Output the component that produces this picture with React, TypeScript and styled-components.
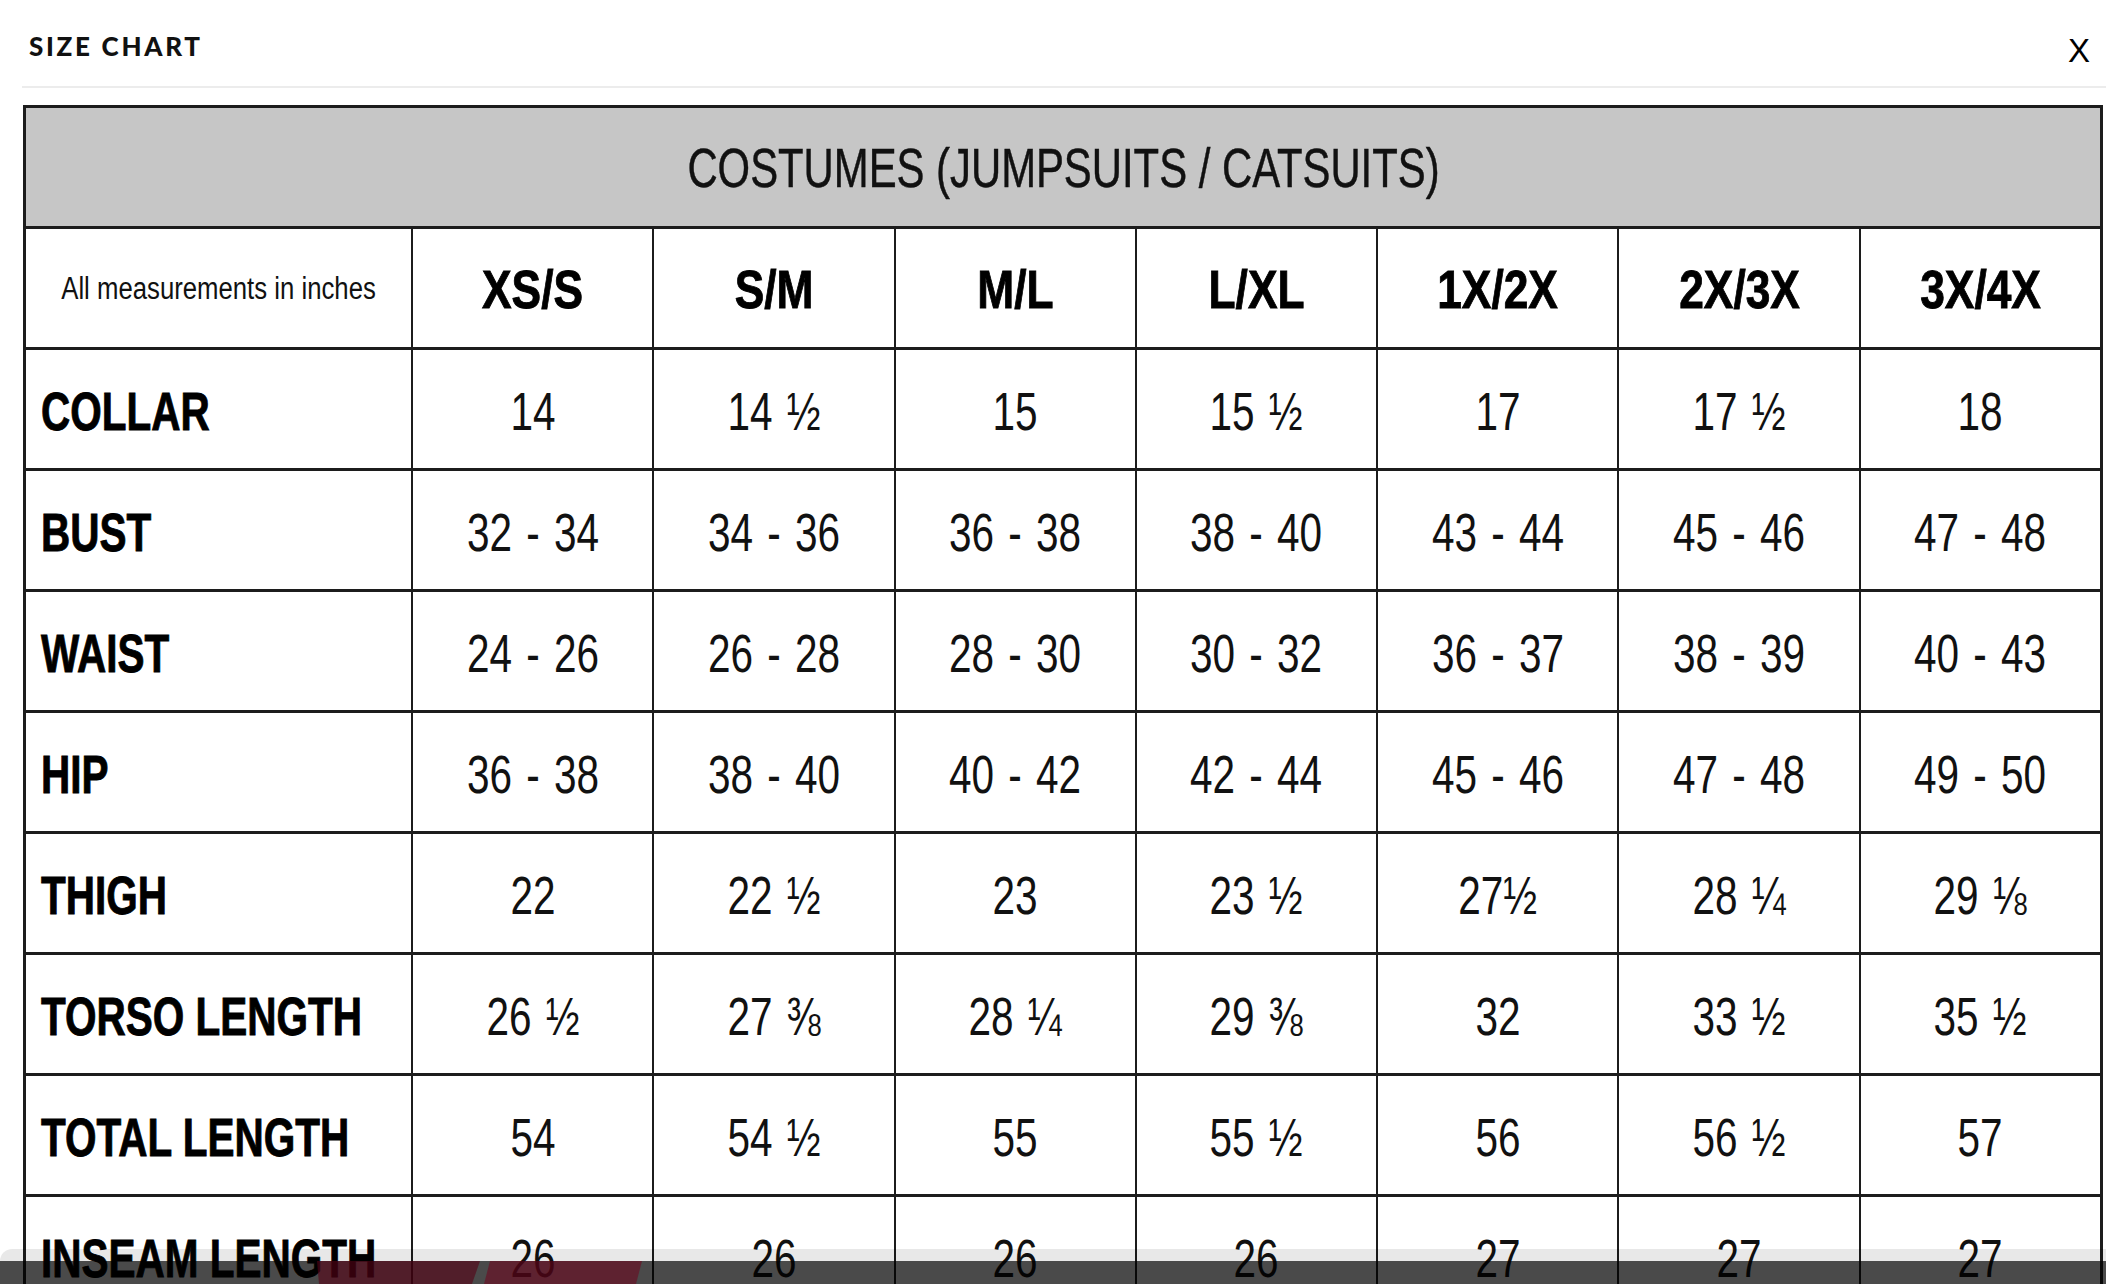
import React from "react";
import styled, { createGlobalStyle } from "styled-components";

const GlobalStyle = createGlobalStyle`
  html, body {
    margin: 0;
    padding: 0;
    background: #ffffff;
    overflow: hidden;
  }
  #root {
    width: 2106px;
    height: 1284px;
  }
`;

const Page = styled.div`
  position: relative;
  width: 2106px;
  height: 1284px;
  overflow: hidden;
  background: #ffffff;
`;

const Header = styled.header`
  display: flex;
  justify-content: space-between;
  align-items: flex-start;
  box-sizing: border-box;
  height: 88px;
  margin-left: 22px;
  padding: 33px 16px 0 7px;
  border-bottom: 2px solid #ececec;
`;

const Title = styled.h2`
  margin: 0;
  font-family: Lato, "Open Sans", sans-serif;
  font-weight: 900;
  font-size: 26px;
  line-height: 1;
  letter-spacing: 2.7px;
  color: #111111;
`;

const CloseButton = styled.button`
  border: none;
  background: none;
  padding: 0;
  margin-top: 1px;
  font-family: "Liberation Sans", Arial, sans-serif;
  font-weight: 400;
  font-size: 33px;
  line-height: 1;
  color: #000000;
  cursor: pointer;
`;

const Table = styled.div`
  display: grid;
  grid-template-columns: 385px repeat(7, minmax(0, 1fr));
  grid-auto-rows: 118px;
  row-gap: 3px;
  column-gap: 2px;
  box-sizing: border-box;
  width: 2080px;
  margin: 17px 0 0 23px;
  padding: 3px;
  background: #1c1c1c;
`;

const BandCell = styled.div`
  grid-column: 1 / -1;
  display: flex;
  align-items: center;
  justify-content: center;
  box-sizing: border-box;
  padding-top: 2px;
  background: #c6c6c6;
`;

const Cell = styled.div<{ $left?: boolean; $head?: boolean }>`
  display: flex;
  align-items: center;
  justify-content: ${(p) => (p.$left ? "flex-start" : "center")};
  box-sizing: border-box;
  min-width: 0;
  padding: ${(p) => (p.$head ? "1px" : "3px")} 0 0 ${(p) => (p.$left ? "15px" : "0")};
  background: #ffffff;
`;

const CondText = styled.span`
  display: inline-block;
  white-space: nowrap;
  line-height: 1;
  font-family: "Liberation Sans", Arial, sans-serif;
  color: #111111;
  transform-origin: center center;
`;

const BandTitle = styled(CondText)`
  font-size: 56px;
  font-weight: 400;
  -webkit-text-stroke: 0.5px #111111;
  transform: scaleX(0.747);
`;

const SizeLabel = styled(CondText)`
  font-size: 54px;
  font-weight: 700;
  color: #000000;
  -webkit-text-stroke: 0.9px #000000;
  transform: scaleX(0.82);
`;

const RowLabel = styled(CondText)`
  font-size: 54px;
  font-weight: 700;
  color: #000000;
  -webkit-text-stroke: 0.9px #000000;
  transform: scaleX(0.75);
  transform-origin: left center;
`;

const Value = styled(CondText)`
  font-size: 54px;
  font-weight: 400;
  word-spacing: 4px;
  transform: scaleX(0.75);
`;

const Note = styled(CondText)`
  font-size: 31px;
  font-weight: 400;
  transform: scaleX(0.83);
`;

const BottomShade = styled.div`
  position: absolute;
  left: 0;
  right: 0;
  bottom: 0;
  height: 35px;
  display: flex;
  flex-direction: column;
  pointer-events: none;
`;

const ShadeLight = styled.div`
  height: 12px;
  background: rgba(0, 0, 0, 0.09);
  border-top-left-radius: 16px;
`;

const ShadeDark = styled.div`
  flex: 1;
  background: rgba(0, 0, 0, 0.71);
  display: flex;
`;

const sizes = ["XS/S", "S/M", "M/L", "L/XL", "1X/2X", "2X/3X", "3X/4X"];

const rows: { label: string; values: string[] }[] = [
  { label: "COLLAR", values: ["14", "14 ½", "15", "15 ½", "17", "17 ½", "18"] },
  { label: "BUST", values: ["32 - 34", "34 - 36", "36 - 38", "38 - 40", "43 - 44", "45 - 46", "47 - 48"] },
  { label: "WAIST", values: ["24 - 26", "26 - 28", "28 - 30", "30 - 32", "36 - 37", "38 - 39", "40 - 43"] },
  { label: "HIP", values: ["36 - 38", "38 - 40", "40 - 42", "42 - 44", "45 - 46", "47 - 48", "49 - 50"] },
  { label: "THIGH", values: ["22", "22 ½", "23", "23 ½", "27½", "28 ¼", "29 ⅛"] },
  { label: "TORSO LENGTH", values: ["26 ½", "27 ⅜", "28 ¼", "29 ⅜", "32", "33 ½", "35 ½"] },
  { label: "TOTAL LENGTH", values: ["54", "54 ½", "55", "55 ½", "56", "56 ½", "57"] },
  { label: "INSEAM LENGTH", values: ["26", "26", "26", "26", "27", "27", "27"] },
];

export default function App() {
  return (
    <>
      <GlobalStyle />
      <Page>
        <Header>
          <Title>SIZE CHART</Title>
          <CloseButton aria-label="Close">X</CloseButton>
        </Header>
        <Table>
          <BandCell>
            <BandTitle>COSTUMES (JUMPSUITS / CATSUITS)</BandTitle>
          </BandCell>
          <Cell $head>
            <Note>All measurements in inches</Note>
          </Cell>
          {sizes.map((s) => (
            <Cell $head key={s}>
              <SizeLabel>{s}</SizeLabel>
            </Cell>
          ))}
          {rows.map((r) => (
            <React.Fragment key={r.label}>
              <Cell $left>
                <RowLabel>{r.label}</RowLabel>
              </Cell>
              {r.values.map((v, i) => (
                <Cell key={r.label + i}>
                  <Value>{v}</Value>
                </Cell>
              ))}
            </React.Fragment>
          ))}
        </Table>
        <BottomShade>
          <ShadeLight />
          <ShadeDark>
            <svg width="2106" height="23" viewBox="0 0 2106 23" preserveAspectRatio="none">
              <polygon points="317,0 480,0 472,23 319,23" fill="rgba(87,1,21,0.6)" />
              <polygon points="490,0 642,0 636,23 484,23" fill="rgba(109,9,31,0.6)" />
            </svg>
          </ShadeDark>
        </BottomShade>
      </Page>
    </>
  );
}
